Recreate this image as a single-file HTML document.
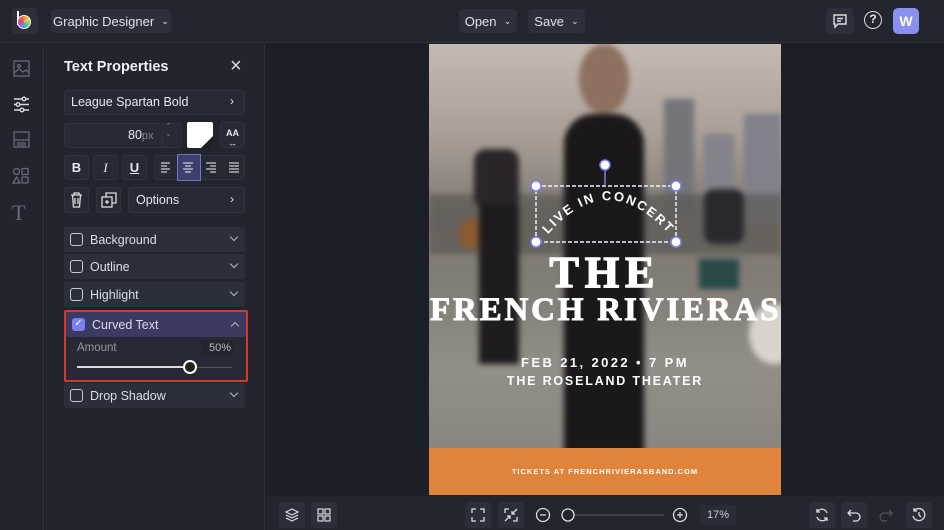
<!DOCTYPE html><html><head><style>
*{margin:0;padding:0;box-sizing:border-box}
body{width:944px;height:530px;background:#1d1f28;font-family:"Liberation Sans",sans-serif;color:#e6e7ee;position:relative;overflow:hidden;font-size:13px}
.a{position:absolute}
.top{left:0;top:0;width:944px;height:43px;background:#23252f;border-bottom:1px solid #2e303b}
.btn{background:#2d2f3b;border-radius:4px;color:#dfe0e8;font-size:13px;display:flex;align-items:center;justify-content:center}
.side{left:0;top:44px;width:44px;height:486px;background:#22242e;border-right:1px solid #2e303b}
.panel{left:45px;top:44px;width:220px;height:486px;background:#22242e;border-right:1px solid #2e303b}
.box{background:#272935;border:1px solid #30323e;border-radius:3px}
.row{left:64px;width:181px;height:25px;background:#2c2e3a;border-radius:2px;display:flex;align-items:center;padding-left:26px;font-size:12.5px;color:#dcdde6}
.cb{position:absolute;left:6px;top:6px;width:13px;height:13px;border:1.5px solid #c8c9d2;border-radius:3px}
.chev{position:absolute;right:8px;top:7px;width:6px;height:6px;border-right:1.5px solid #bbb;border-bottom:1.5px solid #bbb;transform:rotate(45deg)}
.bot{left:266px;top:496px;width:678px;height:34px;background:#23252f}
.ib{width:26px;height:26px;background:#2c2e3a;border-radius:3px;top:502px}
</style></head><body>
<div class="a top"></div>
<div class="a" style="left:12px;top:8px;width:26px;height:26px;background:#2d2f3b;border-radius:4px"></div>
<div class="a" style="left:17px;top:11px;width:2px;height:14px;background:#fff"></div>
<div class="a" style="left:17px;top:15px;width:14px;height:14px;border-radius:50%;background:conic-gradient(#e84,#ec4,#6c6,#4ae,#a5d,#e45,#e84);border:1.5px solid #fff"></div>
<div class="a btn" style="left:51px;top:9px;width:120px;height:24px">Graphic Designer &nbsp;<span style="font-size:9px">⌄</span></div>
<div class="a btn" style="left:459px;top:9px;width:58px;height:24px">Open &nbsp;<span style="font-size:9px">⌄</span></div>
<div class="a btn" style="left:528px;top:9px;width:57px;height:24px">Save &nbsp;<span style="font-size:9px">⌄</span></div>
<div class="a btn" style="left:826px;top:8px;width:28px;height:26px">
<svg width="16" height="16" viewBox="0 0 16 16" fill="none" stroke="#ddd" stroke-width="1.4"><path d="M2 2h12v9H6l-3 3v-3H2z"/><path d="M5 5.5h6M5 8h4"/></svg></div>
<div class="a" style="left:864px;top:11px;width:18px;height:18px;border:1.6px solid #ddd;border-radius:50%;text-align:center;font-size:12px;line-height:15px;font-weight:bold">?</div>
<div class="a" style="left:893px;top:8px;width:26px;height:26px;background:#8b8ff0;border-radius:5px;color:#fff;font-weight:bold;text-align:center;line-height:26px;font-size:14px">W</div>

<div class="a side"></div>
<svg class="a" style="left:13px;top:60px" width="17" height="17" viewBox="0 0 17 17" fill="none" stroke="#666a78" stroke-width="1.3"><rect x="1" y="1" width="15" height="15"/><circle cx="6" cy="6" r="1.5"/><path d="M1 13l5-4 4 3 3-2 3 3"/></svg>
<svg class="a" style="left:13px;top:96px" width="17" height="17" viewBox="0 0 17 17" fill="none" stroke="#d8d9e2" stroke-width="1.4"><path d="M1 3h15M1 8.5h15M1 14h15"/><circle cx="11" cy="3" r="1.8" fill="#22242e"/><circle cx="5" cy="8.5" r="1.8" fill="#22242e"/><circle cx="9" cy="14" r="1.8" fill="#22242e"/></svg>
<svg class="a" style="left:13px;top:131px" width="17" height="17" viewBox="0 0 17 17" fill="none" stroke="#666a78" stroke-width="1.3"><rect x="1" y="1" width="15" height="15"/><path d="M1 9h15M4 12h9M4 14h9"/></svg>
<svg class="a" style="left:12px;top:167px" width="18" height="18" viewBox="0 0 18 18" fill="none" stroke="#666a78" stroke-width="1.3"><circle cx="4.5" cy="4.5" r="3"/><rect x="10" y="1.5" width="6" height="6"/><path d="M4.5 10l3.5 6H1z"/><rect x="10" y="10" width="6" height="6" rx="1"/></svg>
<div class="a" style="left:12px;top:200px;font-family:'Liberation Serif',serif;font-size:22px;color:#666a78">T</div>

<div class="a panel"></div>
<div class="a" style="left:64px;top:59px;font-size:14.5px;font-weight:bold;color:#f0f0f5">Text Properties</div>
<div class="a" style="left:230px;top:55px;font-size:20px;color:#ddd">×</div>
<div class="a box" style="left:64px;top:90px;width:181px;height:25px"></div>
<div class="a" style="left:71px;top:95px;font-size:12.5px">League Spartan Bold</div>
<div class="a" style="left:230px;top:94px;font-size:12px">›</div>
<div class="a box" style="left:64px;top:123px;width:118px;height:25px"></div>
<div class="a" style="left:128px;top:128px;font-size:12.5px">80<span style="color:#888;font-size:11px">px</span></div>
<div class="a" style="left:162px;top:123px;width:1px;height:25px;background:#30323e"></div>
<div class="a" style="left:167px;top:122px;font-size:9px;color:#aaa;line-height:11px">ˆ<br>ˇ</div>
<div class="a" style="left:187px;top:122px;width:26px;height:26px;background:#fff;border-radius:2px;overflow:hidden"><div style="position:absolute;right:0;bottom:0;border-left:12px solid transparent;border-bottom:12px solid #222"></div></div>
<div class="a box" style="left:220px;top:122px;width:25px;height:26px;text-align:center;font-size:9px;font-weight:bold;line-height:10px;padding-top:5px">AA<br>↔</div>
<div class="a box" style="left:64px;top:155px;width:25px;height:25px;text-align:center;line-height:23px;font-weight:bold">B</div>
<div class="a box" style="left:93px;top:155px;width:25px;height:25px;text-align:center;line-height:23px;font-style:italic;font-family:'Liberation Serif',serif">I</div>
<div class="a box" style="left:122px;top:155px;width:25px;height:25px;text-align:center;line-height:23px;text-decoration:underline;font-weight:bold">U</div>
<div class="a box" style="left:154px;top:155px;width:91px;height:25px"></div>
<div class="a" style="left:177px;top:154px;width:24px;height:27px;background:#3e3f6e;border:1px solid #7175c8"></div>
<svg class="a" style="left:154px;top:155px" width="91" height="25" fill="none" stroke="#ccc" stroke-width="1.2"><path d="M7 8h9M7 11h6M7 14h9M7 17h6"/><path d="M29 8h10M31 11h6M29 14h10M31 17h6"/><path d="M52 8h10M56 11h6M52 14h10M56 17h6"/><path d="M75 8h10M75 11h10M75 14h10M75 17h10"/></svg>
<div class="a box" style="left:64px;top:187px;width:25px;height:26px"></div>
<svg class="a" style="left:69px;top:192px" width="15" height="16" fill="none" stroke="#ddd" stroke-width="1.3"><path d="M2 3h11M5 3V1h5v2M3.5 3l1 12h6l1-12M6 6v6M9 6v6"/></svg>
<div class="a box" style="left:96px;top:187px;width:25px;height:26px"></div>
<svg class="a" style="left:101px;top:192px" width="16" height="16" fill="none" stroke="#ddd" stroke-width="1.3"><rect x="1" y="5" width="10" height="10"/><path d="M5 5V1h10v10h-4M6 8v4M4 10h4"/></svg>
<div class="a box" style="left:128px;top:187px;width:117px;height:26px"></div>
<div class="a" style="left:136px;top:193px;font-size:12.5px">Options</div>
<div class="a" style="left:230px;top:192px;font-size:12px">›</div>

<div class="a row" style="top:227px"><div class="cb"></div>Background<div class="chev"></div></div>
<div class="a row" style="top:254px"><div class="cb"></div>Outline<div class="chev"></div></div>
<div class="a row" style="top:282px"><div class="cb"></div>Highlight<div class="chev"></div></div>
<div class="a" style="left:64px;top:310px;width:184px;height:72px;background:#272935;border:2px solid #d33a2c;border-radius:2px"></div>
<div class="a row" style="top:312px;left:66px;width:180px;background:#3a3a63"><div class="cb" style="background:#7b80f0;border-color:#7b80f0;color:#fff;font-size:10px;line-height:10px;text-align:center">✓</div>Curved Text<div class="chev" style="transform:rotate(225deg);top:11px"></div></div>
<div class="a" style="left:77px;top:342px;font-size:11.5px;color:#999">Amount</div>
<div class="a" style="left:201px;top:340px;width:32px;height:16px;background:#22242e;font-size:11px;color:#bbb;text-align:right;padding-right:2px;line-height:16px">50%</div>
<div class="a" style="left:77px;top:366px;width:113px;height:2px;background:#ddd"></div>
<div class="a" style="left:190px;top:367px;width:42px;height:1px;background:#555"></div>
<div class="a" style="left:183px;top:360px;width:14px;height:14px;border-radius:50%;background:#222;border:2px solid #fff"></div>
<div class="a row" style="top:383px"><div class="cb"></div>Drop Shadow<div class="chev"></div></div>

<!-- poster -->
<div class="a" style="left:429px;top:44px;width:352px;height:405px;overflow:hidden;background:linear-gradient(180deg,#c4bab2 0%,#aaa098 22%,#7f7873 42%,#837d78 60%,#948e88 80%,#8a857f 100%)">
<div style="position:absolute;inset:0;filter:blur(3px)">
<div class="a" style="left:235px;top:55px;width:30px;height:120px;background:#74747a"></div>
<div class="a" style="left:275px;top:90px;width:30px;height:90px;background:#84828a"></div>
<div class="a" style="left:315px;top:70px;width:37px;height:110px;background:#80808a"></div>
<div class="a" style="left:0;top:150px;width:352px;height:60px;background:#55514d;opacity:.6"></div>
<div class="a" style="left:45px;top:105px;width:45px;height:60px;background:#2a2628;border-radius:12px"></div>
<div class="a" style="left:30px;top:175px;width:50px;height:30px;background:#8a5a30;border-radius:14px"></div>
<div class="a" style="left:50px;top:160px;width:40px;height:160px;background:#1e1c1e"></div>
<div class="a" style="left:150px;top:0;width:50px;height:70px;background:#8e7060;border-radius:50%"></div>
<div class="a" style="left:135px;top:70px;width:80px;height:340px;background:#1a1819;border-radius:30px 30px 0 0"></div>
<div class="a" style="left:275px;top:145px;width:40px;height:55px;background:#2a2a2e;border-radius:10px"></div>
<div class="a" style="left:270px;top:215px;width:40px;height:30px;background:#2a4a48"></div>
<div class="a" style="left:320px;top:260px;width:50px;height:60px;background:#d8d4cc;border-radius:50%"></div>
</div></div>
<svg class="a" style="left:429px;top:44px" width="352" height="405">
<path id="c" d="M115 195 Q176 120 240 190" fill="none"/>
<text font-family="Liberation Sans" font-weight="bold" font-size="13" fill="#fff" letter-spacing="2"><textPath href="#c" startOffset="6">LIVE IN CONCERT</textPath></text>
<rect x="107" y="142" width="140" height="56" fill="none" stroke="#eef" stroke-width="1.5" stroke-dasharray="4 2"/>
<path d="M176 121v21" stroke="#99f" stroke-width="1.2"/>
<g fill="#fff" stroke="#7b80f0" stroke-width="1.5"><circle cx="176" cy="121" r="5"/><circle cx="107" cy="142" r="5"/><circle cx="247" cy="142" r="5"/><circle cx="107" cy="198" r="5"/><circle cx="247" cy="198" r="5"/></g>
<text x="176" y="243" text-anchor="middle" font-family="Liberation Serif" font-weight="bold" font-size="44" fill="#fff" stroke="#fff" stroke-width="1.5" letter-spacing="6">THE</text>
<text x="176" y="276" text-anchor="middle" font-family="Liberation Serif" font-weight="bold" font-size="33" fill="#fff" stroke="#fff" stroke-width="1" letter-spacing="1.5" textLength="350">FRENCH RIVIERAS</text>
<text x="176" y="323" text-anchor="middle" font-family="Liberation Sans" font-weight="bold" font-size="13" fill="#fff" letter-spacing="2.4">FEB 21, 2022 • 7 PM</text>
<text x="176" y="341" text-anchor="middle" font-family="Liberation Sans" font-weight="bold" font-size="12.5" fill="#fff" letter-spacing="1.8">THE ROSELAND THEATER</text>
</svg>
<div class="a" style="left:429px;top:448px;width:352px;height:47px;background:#e0843b;color:#fff;font-size:7.5px;font-weight:bold;letter-spacing:1px;text-align:center;line-height:47px">TICKETS AT FRENCHRIVIERASBAND.COM</div>

<div class="a bot"></div>
<div class="a ib" style="left:279px"></div><svg class="a" style="left:284px;top:507px" width="16" height="16" fill="none" stroke="#ddd" stroke-width="1.2"><path d="M8 2l6 3-6 3-6-3z"/><path d="M2 8l6 3 6-3M2 11l6 3 6-3"/></svg>
<div class="a ib" style="left:311px"></div><svg class="a" style="left:317px;top:508px" width="14" height="14" fill="none" stroke="#ddd" stroke-width="1.2"><rect x="1" y="1" width="5" height="5"/><rect x="8" y="1" width="5" height="5"/><rect x="1" y="8" width="5" height="5"/><rect x="8" y="8" width="5" height="5"/></svg>
<div class="a ib" style="left:465px"></div><svg class="a" style="left:471px;top:508px" width="14" height="14" fill="none" stroke="#ddd" stroke-width="1.3"><path d="M1 5V1h4M9 1h4v4M13 9v4H9M5 13H1V9"/></svg>
<div class="a ib" style="left:498px"></div><svg class="a" style="left:504px;top:508px" width="14" height="14" fill="none" stroke="#ddd" stroke-width="1.3"><path d="M1 5V1h4M13 1L8 6M8 3v3h3M1 13l5-5M3 8h3v3M13 9v4H9"/></svg>
<svg class="a" style="left:535px;top:507px" width="160" height="16" fill="none" stroke="#ddd" stroke-width="1.3"><circle cx="8" cy="8" r="6.5"/><path d="M5 8h6"/><path d="M34 8h95" stroke="#555"/><circle cx="33" cy="8" r="6" fill="#23252f"/><circle cx="145" cy="8" r="6.5"/><path d="M142 8h6M145 5v6"/></svg>
<div class="a" style="left:700px;top:505px;width:36px;height:20px;background:#2a2c37;color:#ccc;font-size:11px;text-align:center;line-height:20px">17%</div>
<div class="a ib" style="left:809px"></div><svg class="a" style="left:814px;top:507px" width="16" height="16" fill="none" stroke="#ddd" stroke-width="1.3"><path d="M13 6A5.5 5.5 0 0 0 3 5M3 10a5.5 5.5 0 0 0 10 1M3 2v3h3M13 14v-3h-3"/></svg>
<div class="a ib" style="left:841px"></div><svg class="a" style="left:846px;top:507px" width="16" height="16" fill="none" stroke="#ddd" stroke-width="1.3"><path d="M5 3L2 6l3 3M2 6h8a4 4 0 0 1 0 8H7"/></svg>
<svg class="a" style="left:878px;top:507px" width="16" height="16" fill="none" stroke="#555" stroke-width="1.3"><path d="M11 3l3 3-3 3M14 6H6a4 4 0 0 0 0 8h3"/></svg>
<div class="a ib" style="left:906px"></div><svg class="a" style="left:911px;top:507px" width="16" height="16" fill="none" stroke="#ddd" stroke-width="1.3"><path d="M3 4a6 6 0 1 1-1 5M3 1v3h3M8 5v3l2 2"/></svg>
</body></html>
